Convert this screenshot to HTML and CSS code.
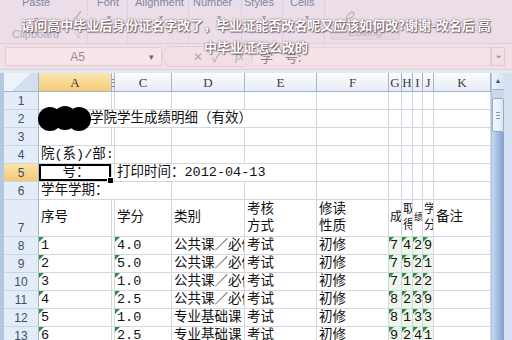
FILE: index.html
```html
<!DOCTYPE html>
<html lang="zh-CN">
<head>
    <meta charset="UTF-8">
    <meta name="viewport" content="width=device-width, initial-scale=1.0">
    <title>学生成绩明细 - Microsoft Excel</title>
    <link rel="stylesheet" href="styles.css">
</head>
<body>
    <div class="window">
        <div class="ribbon">
            <div class="group clipboard">
                <div class="group-top">
                    <span class="label">Paste</span>
                    <svg class="brush" width="12" height="14" viewBox="0 0 12 14"><path d="M2 13 L10 2" stroke="#c7b9c6" stroke-width="2" fill="none"/></svg>
                </div>
                <span class="drop">▾</span>
                <div class="group-foot">
                    <span class="group-name">Clipboard</span>
                    <span class="launcher">↘</span>
                </div>
            </div>
            <div class="group font-group">
                <span class="label">Font</span>
                <span class="drop">▾</span>
            </div>
            <div class="group align-group">
                <span class="label">Alignment</span>
                <span class="drop">▾</span>
            </div>
            <div class="group number-group">
                <span class="label">Number</span>
                <span class="drop">▾</span>
            </div>
            <div class="group styles-group">
                <span class="label">Styles</span>
                <span class="drop">▾</span>
            </div>
            <div class="group cells-group">
                <span class="label">Cells</span>
                <span class="drop">▾</span>
            </div>
            <div class="group editing">
                <svg class="eraser" width="14" height="12" viewBox="0 0 14 12"><path d="M3 9 C5 3 9 1 11 3 C12 5 8 8 4 10 Z" fill="none" stroke="#bcaeba" stroke-width="1.2"/></svg>
                <div class="editing-box">Editing</div>
            </div>
        </div>

        <div class="formula-bar">
            <div class="name-box"><span class="ref">A5</span><span class="name-arrow">▾</span></div>
            <div class="fx-buttons"><span>✕</span><span>✓</span><span class="fx">fx</span></div>
            <div class="formula-input">学&nbsp;&nbsp;&nbsp;&nbsp;号:</div>
            <div class="expand">⌄</div>
        </div>
        <div class="band"></div>

        <div class="sheet-area">
            <div class="sheet">
                <!-- header -->
                <div class="corner"></div>
                <div class="ch sel">A</div>
                <div class="ch">B</div>
                <div class="ch">C</div>
                <div class="ch">D</div>
                <div class="ch">E</div>
                <div class="ch">F</div>
                <div class="ch">G</div>
                <div class="ch">H</div>
                <div class="ch">I</div>
                <div class="ch">J</div>
                <div class="ch">K</div>

                <!-- 1 -->
                <div class="rh">1</div>
                <div class="c"></div><div class="c"></div><div class="c"></div><div class="c"></div><div class="c"></div><div class="c"></div>
                <div class="c"></div><div class="c"></div><div class="c"></div><div class="c"></div><div class="c"></div>

                <!-- 2 -->
                <div class="rh">2</div>
                <div class="c span5 title-cell">
                    <svg class="blot" width="54" height="26" viewBox="0 0 54 26">
                        <ellipse cx="12" cy="13" rx="12" ry="12" fill="#000"/>
                        <ellipse cx="27" cy="12" rx="12" ry="12" fill="#000"/>
                        <ellipse cx="41" cy="13" rx="12" ry="12" fill="#000"/>
                    </svg>学院学生成绩明细（有效）
                </div>
                <div class="c"></div><div class="c"></div><div class="c"></div><div class="c"></div><div class="c"></div><div class="c"></div>

                <!-- 3 -->
                <div class="rh">3</div>
                <div class="c"></div><div class="c"></div><div class="c"></div><div class="c"></div><div class="c"></div><div class="c"></div>
                <div class="c"></div><div class="c"></div><div class="c"></div><div class="c"></div><div class="c"></div>

                <!-- 4 -->
                <div class="rh">4</div>
                <div class="c span2">院(系)/部:</div>
                <div class="c"></div><div class="c"></div><div class="c"></div><div class="c"></div><div class="c"></div>
                <div class="c"></div><div class="c"></div><div class="c"></div><div class="c"></div>

                <!-- 5 -->
                <div class="rh sel">5</div>
                <div class="c active">号：</div>
                <div class="c"></div>
                <div class="c span3">打印时间：2012-04-13</div>
                <div class="c"></div><div class="c"></div><div class="c"></div><div class="c"></div><div class="c"></div><div class="c"></div>

                <!-- 6 -->
                <div class="rh">6</div>
                <div class="c span3">学年学期：</div>
                <div class="c"></div><div class="c"></div><div class="c"></div><div class="c"></div>
                <div class="c"></div><div class="c"></div><div class="c"></div><div class="c"></div>

                <!-- 7 -->
                <div class="rh tall">7</div>
                <div class="c">序号</div>
                <div class="c"></div>
                <div class="c">学分</div>
                <div class="c">类别</div>
                <div class="c wrap">考核<br>方式</div>
                <div class="c wrap">修读<br>性质</div>
                <div class="c narrow">成</div>
                <div class="c narrow wrap">取<br>得</div>
                <div class="c narrow tiny">绩</div>
                <div class="c narrow wrap">学<br>分</div>
                <div class="c">备注</div>

                <!-- 8 -->
                <div class="rh">8</div>
                <div class="c t">1</div><div class="c"></div><div class="c t">4.0</div>
                <div class="c">公共课／必修课</div><div class="c">考试</div><div class="c">初修</div>
                <div class="c t g">7</div><div class="c t g">4</div><div class="c t g">2</div><div class="c t g">9</div><div class="c"></div>

                <!-- 9 -->
                <div class="rh">9</div>
                <div class="c t">2</div><div class="c"></div><div class="c t">5.0</div>
                <div class="c">公共课／必修课</div><div class="c">考试</div><div class="c">初修</div>
                <div class="c t g">7</div><div class="c t g">5</div><div class="c t g">2</div><div class="c t g">1</div><div class="c"></div>

                <!-- 10 -->
                <div class="rh">10</div>
                <div class="c t">3</div><div class="c"></div><div class="c t">1.0</div>
                <div class="c">公共课／必修课</div><div class="c">考试</div><div class="c">初修</div>
                <div class="c t g">7</div><div class="c t g">1</div><div class="c t g">2</div><div class="c t g">2</div><div class="c"></div>

                <!-- 11 -->
                <div class="rh">11</div>
                <div class="c t">4</div><div class="c"></div><div class="c t">2.5</div>
                <div class="c">公共课／必修课</div><div class="c">考试</div><div class="c">初修</div>
                <div class="c t g">8</div><div class="c t g">2</div><div class="c t g">3</div><div class="c t g">9</div><div class="c"></div>

                <!-- 12 -->
                <div class="rh">12</div>
                <div class="c t">5</div><div class="c"></div><div class="c t">1.0</div>
                <div class="c">专业基础课</div><div class="c">考试</div><div class="c">初修</div>
                <div class="c t g">8</div><div class="c t g">1</div><div class="c t g">3</div><div class="c t g">3</div><div class="c"></div>

                <!-- 13 -->
                <div class="rh">13</div>
                <div class="c t">6</div><div class="c"></div><div class="c t">2.5</div>
                <div class="c">专业基础课</div><div class="c">考试</div><div class="c">初修</div>
                <div class="c t g">9</div><div class="c t g">2</div><div class="c t g">4</div><div class="c t g">1</div><div class="c"></div>
            </div>

            <div class="vscroll">
                <div class="scroll-btn">▲</div>
                <div class="scroll-thumb"><span></span><span></span><span></span></div>
                <div class="scroll-track"></div>
            </div>
            <div class="frame-right"></div>
        </div>

        <div class="post-title">请问高中毕业后身份证名字改了，毕业证能否改名呢又应该如何改?谢谢-改名后 高中毕业证怎么改的</div>
    </div>
</body>
</html>
```

FILE: styles.css
```css
:root {
    --grid: #d0d7e5;
    --head-line: #9eb6ce;
    --head-text: #3b4f6e;
    --ribbon: #ebdee8;
    --faded: #7c88a5;
    --pink: #f2dfe5;
}

* {
    margin: 0;
    padding: 0;
    box-sizing: border-box;
}

body {
    width: 512px;
    height: 340px;
    overflow: hidden;
    background: #fff;
    font-family: "Liberation Sans", Arial, sans-serif;
}

.window {
    position: relative;
    width: 512px;
    height: 340px;
    overflow: hidden;
    background: #dce6f3;
}

/* ribbon, washed out */
.ribbon {
    display: flex;
    height: 44px;
    background: var(--ribbon);
    border-bottom: 1px solid #dccfda;
}

.group {
    display: flex;
    flex-direction: column;
    align-items: flex-start;
    height: 43px;
    border-right: 1px solid #dfd2dd;
}

.label {
    font-size: 11px;
    line-height: 12px;
    margin-top: -4px;
    color: var(--faded);
}

.drop {
    font-size: 8px;
    line-height: 10px;
    margin-top: 5px;
    color: #a99eae;
}

.clipboard {
    width: 88px;
    padding-left: 22px;
}

.group-top {
    display: flex;
    align-items: flex-start;
}

.brush {
    margin: 9px 0 0 21px;
}

.clipboard .drop {
    margin: -8px 0 0 12px;
}

.group-foot {
    display: flex;
    align-items: center;
    margin: auto 0 3px -10px;
}

.group-name {
    font-size: 11px;
    color: #b2a9b8;
}

.launcher {
    font-size: 8px;
    color: #c1b5c0;
    margin-left: 14px;
}

.font-group { width: 40px; padding-left: 9px; }
.font-group .drop { margin-left: 10px; }
.align-group { width: 61px; padding-left: 7px; }
.align-group .drop { margin-left: 24px; }
.number-group { width: 53px; padding-left: 4px; }
.number-group .drop { margin-left: 24px; }
.styles-group { width: 41px; padding-left: 2px; }
.styles-group .drop { margin-left: 18px; }
.cells-group { width: 42px; padding-left: 7px; }
.cells-group .drop { margin-left: 15px; }

.editing {
    width: 85px;
    padding: 10px 0 0 5px;
    border-right: none;
}

.eraser {
    margin-left: 13px;
}

.editing-box {
    width: 70px;
    height: 16px;
    margin-top: 2px;
    background: #e4d6e1;
    border: 1px solid #ddd0da;
    border-radius: 2px;
    font-size: 11px;
    line-height: 14px;
    text-align: center;
    color: #c0b3c0;
}

/* formula bar */
.formula-bar {
    display: flex;
    align-items: center;
    height: 25px;
    padding: 0 7px 0 5px;
    background: var(--pink);
}

.name-box {
    display: flex;
    align-items: center;
    width: 157px;
    height: 19px;
    background: #f6e4e9;
    border: 1px solid #e0cdd6;
}

.ref {
    flex: 1;
    text-align: center;
    font-size: 12px;
    color: #978c99;
}

.name-arrow {
    width: 12px;
    font-size: 9px;
    color: #6e6573;
}

.fx-buttons {
    display: flex;
    align-items: center;
    gap: 9px;
    width: 90px;
    height: 21px;
    padding-left: 30px;
    border: 1px solid #e0cfd9;
    border-radius: 11px;
    font-size: 12px;
    color: #b3a6b3;
}

.fx {
    font-family: "Liberation Serif", serif;
    font-style: italic;
    margin-left: 6px;
}

.formula-input {
    flex: 1;
    height: 19px;
    padding-left: 7px;
    background: #f5e2e7;
    border: 1px solid #e6d5dc;
    font: 13px/17px "Noto Sans CJK SC", sans-serif;
    color: #8d808c;
}

.expand {
    width: 14px;
    height: 19px;
    border: 1px solid #dccbd5;
    font-size: 11px;
    line-height: 13px;
    text-align: center;
    color: #8b7f8b;
}

.band {
    height: 4px;
    background: #e3e8f1;
    border-top: 1px solid #d8d3df;
}

/* sheet */
.sheet-area {
    display: flex;
    height: 267px;
    border-left: 4px solid #b5c8e2;
}

.sheet {
    display: grid;
    grid-template-columns: 35px 73px 3px 57px 73px 72px 72px 13px 11px 10px 11px 57px;
    grid-template-rows: 19px repeat(6, 18px) 37px repeat(6, 18px);
    background: #fff;
    align-content: start;
}

.corner {
    background: linear-gradient(135deg, #eef3f9 50%, #d3dfee 50%);
    border-right: 1px solid var(--head-line);
    border-bottom: 1px solid var(--head-line);
}

.ch {
    display: flex;
    align-items: center;
    justify-content: center;
    overflow: hidden;
    background: linear-gradient(#fafcfe, #e6ecf4);
    border-right: 1px solid var(--head-line);
    border-bottom: 1px solid var(--head-line);
    font: 13px/1 "Liberation Serif", serif;
    color: #3c3c3c;
}

.ch.sel {
    background: linear-gradient(#fbe6b2, #f6cb76);
    color: #4a3a1c;
}

.rh {
    display: flex;
    align-items: center;
    justify-content: center;
    background: #e4ecf7;
    border-right: 1px solid var(--head-line);
    border-bottom: 1px solid #c8d6e8;
    font: 12px/1 "Liberation Sans", sans-serif;
    color: var(--head-text);
}

.rh.sel {
    background: linear-gradient(#fbe3a8, #f5c875);
}

.rh.tall {
    align-items: flex-end;
    padding-bottom: 2px;
}

.c {
    position: relative;
    display: flex;
    align-items: center;
    overflow: hidden;
    white-space: nowrap;
    padding-left: 2px;
    border-right: 1px solid var(--grid);
    border-bottom: 1px solid var(--grid);
    font: 13.5px/16px "Liberation Mono", "Noto Sans CJK SC", monospace;
    color: #111;
}

.span2 { grid-column: span 2; }
.span3 { grid-column: span 3; }
.span5 { grid-column: span 5; }

.title-cell {
    overflow: visible;
}

.blot {
    margin: 0 -2px 0 -3px;
}

.active {
    justify-content: center;
    overflow: visible;
    box-shadow: inset 0 0 0 2px #000;
}

/* fill handle sits over the neighbouring cells */
.active::after {
    content: "";
    position: absolute;
    right: -3px;
    bottom: -3px;
    width: 5px;
    height: 5px;
    background: #000;
    border: 1px solid #fff;
    z-index: 2;
}

.wrap {
    white-space: normal;
    line-height: 17px;
}

.narrow {
    padding-left: 1px;
    font-size: 12px;
    line-height: 16px;
}

.tiny {
    font-size: 9px;
}

.g {
    background: #eef7ea;
    padding-left: 1px;
}

/* number stored as text marker */
.t::before {
    content: "";
    position: absolute;
    top: 0;
    left: 0;
    border-top: 5px solid #2f8f3f;
    border-right: 5px solid transparent;
}

/* scrollbar */
.vscroll {
    display: flex;
    flex-direction: column;
    width: 13px;
    background: #c9d8ed;
    border-left: 1px solid #b2c5df;
}

.scroll-btn {
    height: 17px;
    background: linear-gradient(90deg, #eef3fa, #d7e2f1);
    border-bottom: 1px solid #9fb5d4;
    font-size: 7px;
    line-height: 16px;
    text-align: center;
    color: #3d5680;
}

.scroll-thumb {
    display: flex;
    flex-direction: column;
    justify-content: center;
    gap: 2px;
    height: 34px;
    margin-top: 8px;
    padding: 0 3px;
    background: linear-gradient(90deg, #f4f7fb, #dfe7f3);
    border: 1px solid #92aace;
    border-radius: 2px;
}

.scroll-thumb span {
    height: 1px;
    background: #8399bb;
}

.scroll-track {
    flex: 1;
    background: linear-gradient(90deg, #c9d8ed, #7e9fcf);
}

.frame-right {
    width: 8px;
    background: #d5e1f1;
}

/* post title laid over the faded ribbon */
.post-title {
    position: absolute;
    top: 14px;
    left: 0;
    right: 0;
    width: 474px;
    margin: 0 auto;
    font: bold 13px/22px "Noto Sans CJK SC", sans-serif;
    text-align: center;
    color: #fff;
    text-shadow: 0 0 2px rgba(60, 40, 50, 0.8), 1px 1px 1px rgba(60, 40, 50, 0.6);
}
```
